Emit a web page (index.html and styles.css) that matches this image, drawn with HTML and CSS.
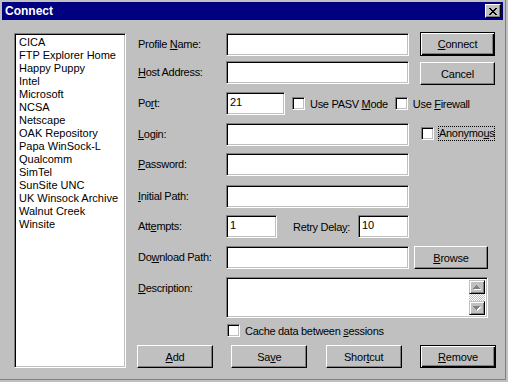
FILE: index.html
```html
<!DOCTYPE html>
<html lang="en">
<head>
  <meta charset="UTF-8">
  <title>Connect</title>
  <link rel="stylesheet" href="styles.css">
</head>
<body>
  <div class="window">
    <div class="titlebar">
      <span class="title">Connect</span>
      <button class="close" type="button">
        <svg width="8" height="7" viewBox="0 0 8 7"><path d="M0 0h2v1H0zM6 0h2v1H6zM1 1h2v1H1zM5 1h2v1H5zM2 2h4v1H2zM3 3h2v1H3zM2 4h4v1H2zM1 5h2v1H1zM5 5h2v1H5zM0 6h2v1H0zM6 6h2v1H6z" fill="#000"/></svg>
      </button>
    </div>

    <div class="client">
      <ul class="sites">
        <li>CICA</li>
        <li>FTP Explorer Home</li>
        <li>Happy Puppy</li>
        <li>Intel</li>
        <li>Microsoft</li>
        <li>NCSA</li>
        <li>Netscape</li>
        <li>OAK Repository</li>
        <li>Papa WinSock-L</li>
        <li>Qualcomm</li>
        <li>SimTel</li>
        <li>SunSite UNC</li>
        <li>UK Winsock Archive</li>
        <li>Walnut Creek</li>
        <li>Winsite</li>
      </ul>

      <form class="profile">
        <label class="lbl">Profile <u>N</u>ame:</label>
        <input class="field" type="text">
        <button class="btn default connect" type="button"><u>C</u>onnect</button>

        <label class="lbl"><u>H</u>ost Address:</label>
        <input class="field" type="text">
        <button class="btn cancel" type="button">Cancel</button>

        <label class="lbl">Po<u>r</u>t:</label>
        <div class="port-row">
          <input class="field port" type="text" value="21">
          <span class="check"><span class="box"></span><span>Use PASV <u>M</u>ode</span></span>
          <span class="check"><span class="box"></span><span>Use <u>F</u>irewall</span></span>
        </div>

        <label class="lbl"><u>L</u>ogin:</label>
        <input class="field" type="text">
        <span class="check anon"><span class="box"></span><span class="focus">Anonymo<u>u</u>s</span></span>

        <label class="lbl"><u>P</u>assword:</label>
        <input class="field" type="password">

        <label class="lbl"><u>I</u>nitial Path:</label>
        <input class="field" type="text">

        <label class="lbl">Att<u>e</u>mpts:</label>
        <div class="attempts-row">
          <input class="field small" type="text" value="1">
          <label class="retry">Retry Dela<u>y</u>:</label>
          <input class="field small" type="text" value="10">
        </div>

        <label class="lbl">Do<u>w</u>nload Path:</label>
        <input class="field" type="text">
        <button class="btn browse" type="button"><u>B</u>rowse</button>

        <label class="lbl"><u>D</u>escription:</label>
        <div class="desc">
          <textarea></textarea>
          <div class="vscroll">
            <span class="arrow">
              <svg width="8" height="5" viewBox="0 0 8 5"><path d="M4 1h1v1H4zM3 2h3v1H3zM2 3h5v1H2zM1 4h7v1H1z" fill="#fff"/><path d="M3 0h1v1H3zM2 1h3v1H2zM1 2h5v1H1zM0 3h7v1H0z" fill="#808080"/></svg>
            </span>
            <span class="track"></span>
            <span class="arrow">
              <svg width="8" height="5" viewBox="0 0 8 5"><path d="M1 1h7v1H1zM2 2h5v1H2zM3 3h3v1H3zM4 4h1v1H4z" fill="#fff"/><path d="M0 0h7v1H0zM1 1h5v1H1zM2 2h3v1H2zM3 3h1v1H3z" fill="#808080"/></svg>
            </span>
          </div>
        </div>

        <span class="check cache"><span class="box"></span><span>Cache data between <u>s</u>essions</span></span>

        <div class="actions">
          <button class="btn" type="button"><u>A</u>dd</button>
          <button class="btn" type="button">Sa<u>v</u>e</button>
          <button class="btn" type="button">Shor<u>t</u>cut</button>
          <button class="btn default" type="button"><u>R</u>emove</button>
        </div>
      </form>
    </div>
  </div>
</body>
</html>
```

FILE: styles.css
```css
html, body {
  margin: 0;
  padding: 0;
  background: #c0c0c0;
}

body {
  font-family: 'Liberation Sans', Arial, sans-serif;
  font-size: 11px;
  color: #000;
}

.window {
  width: 506px;
  height: 380px;
  box-sizing: border-box;
  padding: 2px 2px 0 2px;
  border-right: 1px solid #808080;
  border-bottom: 1px solid #808080;
  background: #c0c0c0;
}

.titlebar {
  display: flex;
  align-items: center;
  justify-content: space-between;
  height: 18px;
  padding-left: 3px;
  background: #000080;
  color: #fff;
}

.title {
  font-size: 12px;
  font-weight: bold;
}

.close {
  display: flex;
  align-items: center;
  justify-content: center;
  width: 16px;
  height: 14px;
  margin-right: 2px;
  padding: 0;
  box-sizing: border-box;
  background: #c0c0c0;
  border: 1px solid;
  border-color: #fff #000 #000 #fff;
  box-shadow: inset -1px -1px #808080;
}

.client {
  display: flex;
  padding: 12px 0 0 12px;
}

/* sunken white fields */
.sites, .field, .box, .desc {
  background: #fff;
  border: 1px solid;
  border-color: #808080 #fff #fff #808080;
  box-shadow: inset 1px 1px #000, inset -1px -1px #c0c0c0;
  box-sizing: border-box;
}

.sites {
  list-style: none;
  margin: 1px 0 0 0;
  padding: 2px 4px;
  width: 112px;
  height: 335px;
  line-height: 13px;
  white-space: nowrap;
}

.profile {
  display: grid;
  grid-template-columns: 88px 183px 87px;
  grid-template-rows: 28px 31px 31px 30px 32px 30px 31px 31px 45px 23px 23px;
  align-items: start;
  margin-left: 12px;
  letter-spacing: -0.3px;
}

.lbl {
  grid-column: 1;
  height: 23px;
  line-height: 23px;
  margin-top: 1px;
  white-space: nowrap;
}

.field {
  display: block;
  height: 23px;
  width: 183px;
  margin: 1px 0 0 0;
  padding: 0 3px 3px 3px;
  font: inherit;
  letter-spacing: 0;
  color: #000;
  outline: none;
}

.btn {
  height: 23px;
  width: 76px;
  padding: 0;
  font: inherit;
  letter-spacing: -0.2px;
  color: #000;
  background: #c0c0c0;
  box-sizing: border-box;
  border: 1px solid;
  border-color: #fff #000 #000 #fff;
  box-shadow: inset -1px -1px #808080;
}

.btn.default {
  border: 1px solid #000;
  box-shadow: inset 1px 1px #fff, inset -1px -1px #000, inset -2px -2px #808080;
}

.connect {
  margin-left: 11px;
  width: 75px;
  height: 24px;
}

.cancel {
  margin: 2px 0 0 11px;
  width: 75px;
}

.browse {
  margin: 1px 0 0 5px;
  width: 74px;
}

.port-row {
  grid-column: 2 / 4;
  display: flex;
  align-items: center;
  height: 23px;
  margin-top: 1px;
}

.field.port {
  width: 59px;
  margin: 0;
}

.port-row .check {
  margin-left: 7px;
}

.check {
  display: flex;
  align-items: center;
  gap: 5px;
  height: 23px;
  white-space: nowrap;
}

.box {
  width: 13px;
  height: 13px;
  flex: none;
}

.anon {
  margin: 0 0 0 12px;
}

.focus {
  outline: 1px dotted #000;
  padding: 0 0 1px 0;
}

.attempts-row {
  grid-column: 2;
  display: flex;
  align-items: center;
  height: 23px;
  margin-top: 1px;
}

.field.small {
  width: 51px;
  margin: 0;
}

.retry {
  margin-left: 16px;
}

.attempts-row .field.small:last-child {
  margin-left: auto;
}

.desc {
  grid-column: 2 / 4;
  display: flex;
  width: 262px;
  height: 41px;
  margin-top: 1px;
  padding: 2px;
}

.desc textarea {
  flex: 1;
  border: none;
  resize: none;
  outline: none;
  font: inherit;
  padding: 1px 2px;
}

.vscroll {
  display: flex;
  flex-direction: column;
  width: 16px;
}

.arrow {
  display: flex;
  align-items: center;
  justify-content: center;
  height: 14px;
  box-sizing: border-box;
  background: #c0c0c0;
  border: 1px solid;
  border-color: #c0c0c0 #000 #000 #c0c0c0;
  box-shadow: inset 1px 1px #fff, inset -1px -1px #808080;
}

.track {
  flex: 1;
  background: repeating-conic-gradient(#fff 0 25%, #c0c0c0 0 50%) 0 0 / 2px 2px;
}

.cache {
  grid-column: 2 / 4;
  height: 13px;
  margin: 3px 0 0 1px;
}

.actions {
  grid-column: 1 / 4;
  display: flex;
  justify-content: space-between;
  margin: 1px 0 0 -1px;
}
```
